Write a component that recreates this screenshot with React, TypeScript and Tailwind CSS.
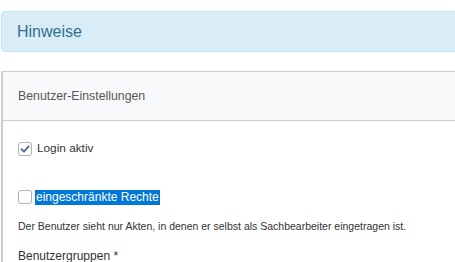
import React from "react";

function Box({ checked }: { checked?: boolean }) {
  return (
    <div className="w-[14px] h-[14px] rounded-[3px] border border-[#aab2ba] bg-white flex items-center justify-center shrink-0">
      {checked && (
        <svg width="10" height="10" viewBox="0 0 10 10">
          <path d="M1.5 5.2 L4 7.6 L8.6 2.4" fill="none" stroke="#4d6f90" strokeWidth="1.9" strokeLinecap="round" strokeLinejoin="round" />
        </svg>
      )}
    </div>
  );
}

export default function App() {
  return (
    <div className="w-[455px] h-[262px] overflow-hidden bg-white font-['Liberation_Sans',Arial,sans-serif]">
      <div className="pt-[11px] pl-px">
        <div className="h-[41px] w-[470px] border border-[#bce8f1] bg-[#d9edf7] rounded-[4px] flex items-center pl-[15px] text-[16px] text-[#31708f]">
          Hinweise
        </div>
      </div>
      <div className="mt-[19px] ml-px w-[470px] border border-[#c9cdd1] border-l-2">
        <div className="h-[49px] bg-[#f8f9fb] border-b border-[#c9cdd1] flex items-center pl-[15px] text-[12.3px] text-[#555]">
          Benutzer-Einstellungen
        </div>
        <div className="pl-[15px] text-[#333]">
          <div className="mt-[20px] h-[16px] flex items-center gap-[5px] text-[11.8px]">
            <Box checked />
            <span>Login aktiv</span>
          </div>
          <div className="mt-[32px] h-[16px] flex items-center gap-[3px] text-[12px]">
            <Box />
            <span className="bg-[#0078d7] text-white px-px leading-[15px]">eingeschränkte Rechte</span>
          </div>
          <div className="mt-[14px] leading-[14px] text-[10.5px]">
            Der Benutzer sieht nur Akten, in denen er selbst als Sachbearbeiter eingetragen ist.
          </div>
          <div className="mt-[15px] leading-[16px] text-[12px]">Benutzergruppen *</div>
        </div>
      </div>
    </div>
  );
}
